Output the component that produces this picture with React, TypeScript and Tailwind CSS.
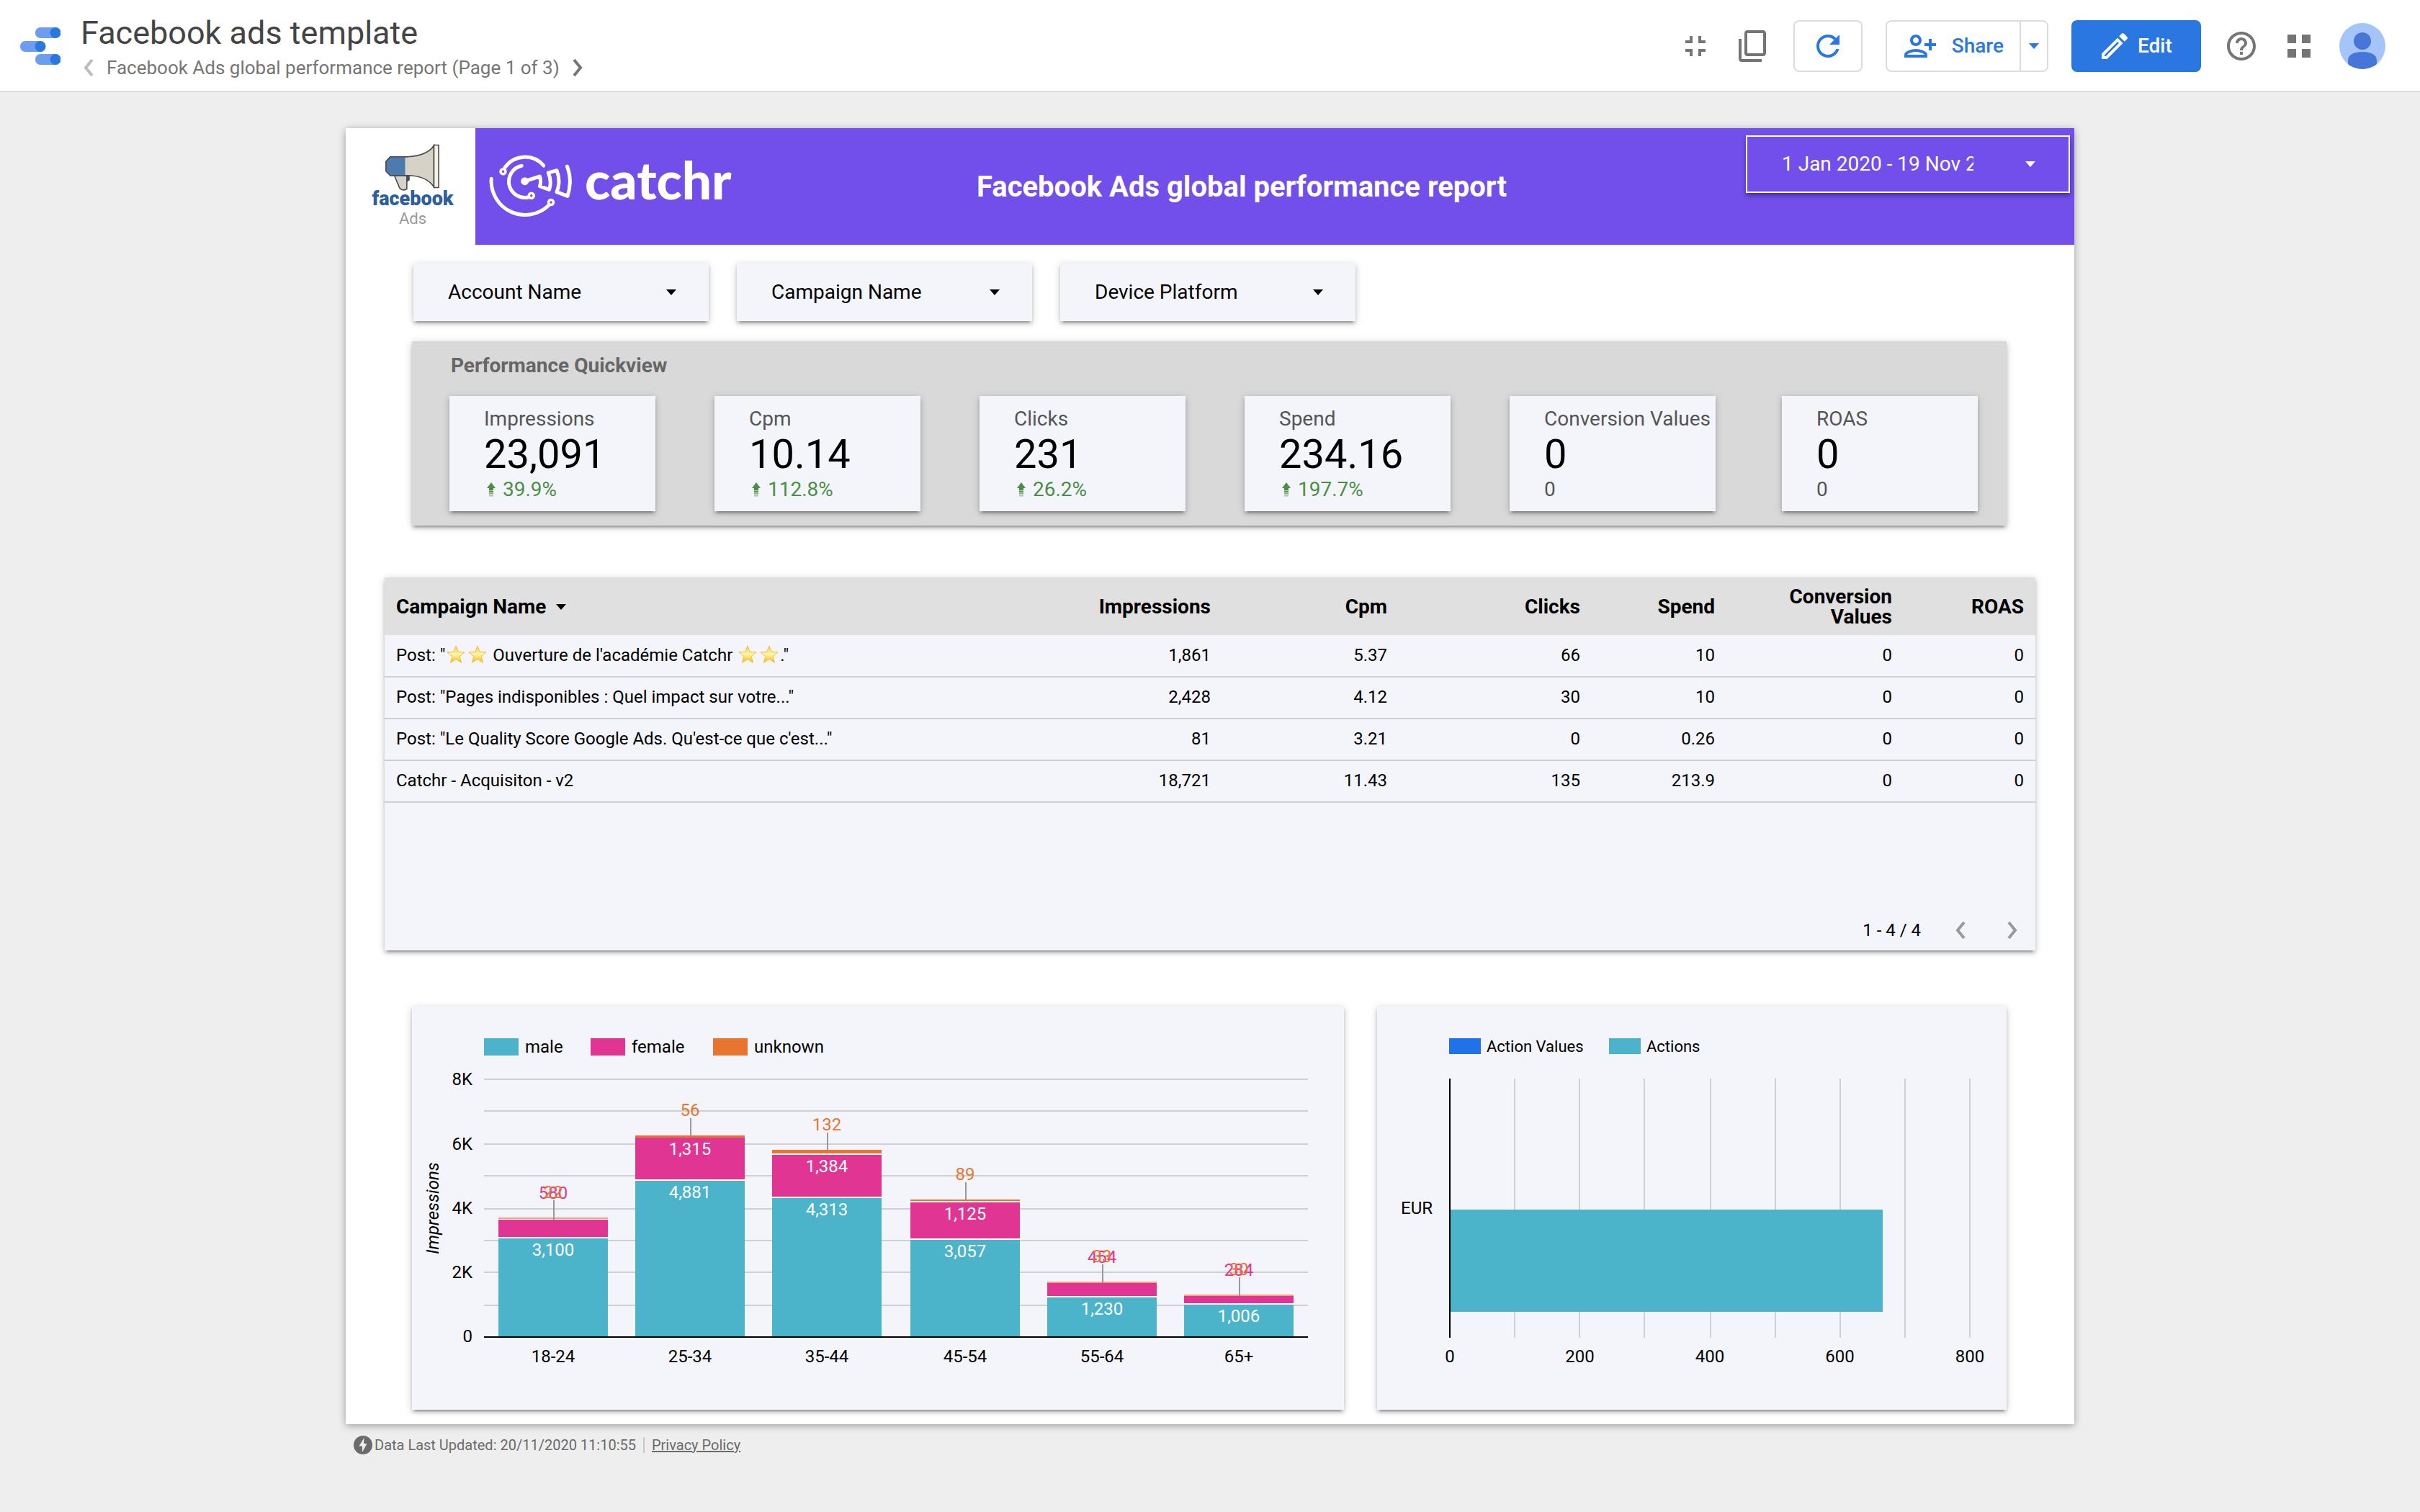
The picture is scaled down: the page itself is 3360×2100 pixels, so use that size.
import React from "react";

const cardShadow =
  "shadow-[0_4px_4px_rgba(0,0,0,0.14),0_6px_2px_-4px_rgba(0,0,0,0.2),0_2px_10px_rgba(0,0,0,0.2)]";

function Icon({ d, className = "" }: { d: string; className?: string }) {
  return (
    <svg viewBox="0 0 24 24" className={`size-12 shrink-0 fill-current ${className}`} aria-hidden="true">
      <path d={d} />
    </svg>
  );
}

const icons = {
  exitFullscreen: "M5 16h3v3h2v-5H5v2zm3-8H5v2h5V5H8v3zm6 11h2v-3h3v-2h-5v5zm2-11V5h-2v5h5V8h-3z",
  copy: "M19 1H8C6.9 1 6 1.9 6 3v14c0 1.1.9 2 2 2h11c1.1 0 2-.9 2-2V3c0-1.1-.9-2-2-2zm0 16H8V3h11v14zM2 7v14c0 1.1.9 2 2 2h14v-2H4V7H2z",
  refresh:
    "M17.65 6.35C16.2 4.9 14.21 4 12 4c-4.42 0-7.99 3.58-7.99 8s3.57 8 7.99 8c3.73 0 6.84-2.55 7.73-6h-2.08c-.82 2.33-3.04 4-5.65 4-3.31 0-6-2.69-6-6s2.69-6 6-6c1.66 0 3.14.69 4.22 1.78L13 11h7V4l-2.35 2.35z",
  personAdd:
    "M13 8c0-2.21-1.79-4-4-4S5 5.79 5 8s1.79 4 4 4 4-1.79 4-4zm-2 0c0 1.1-.9 2-2 2s-2-.9-2-2 .9-2 2-2 2 .9 2 2zM1 18v2h16v-2c0-2.66-5.33-4-8-4s-8 1.34-8 4zm2 0c.2-.71 3.3-2 6-2 2.69 0 5.78 1.28 6 2H3zM20 15v-3h3v-2h-3V7h-2v3h-3v2h3v3h2z",
  edit: "M14.06 9.02l.92.92L5.92 19H5v-.92l9.06-9.06M17.66 3c-.25 0-.51.1-.7.29l-1.83 1.83 3.75 3.75 1.83-1.83c.39-.39.39-1.02 0-1.41l-2.34-2.34c-.2-.2-.45-.29-.71-.29zm-3.6 3.19L3 17.25V21h3.75L17.81 9.94l-3.75-3.75z",
  help: "M11 18h2v-2h-2v2zm1-16C6.48 2 2 6.48 2 12s4.48 10 10 10 10-4.48 10-10S17.52 2 12 2zm0 18c-4.41 0-8-3.59-8-8s3.59-8 8-8 8 3.59 8 8-3.59 8-8 8zm0-14c-2.21 0-4 1.79-4 4h2c0-1.1.9-2 2-2s2 .9 2 2c0 2-3 1.75-3 5h2c0-2.25 3-2.5 3-5 0-2.21-1.79-4-4-4z",
  apps: "M4 4h6v6H4zM14 4h6v6h-6zM4 14h6v6H4zM14 14h6v6h-6z",
};

function Caret({ className = "" }: { className?: string }) {
  return (
    <svg viewBox="0 0 14 8" className={`h-2 w-3.5 shrink-0 fill-current ${className}`} aria-hidden="true">
      <path d="M0 0h14L7 8z" />
    </svg>
  );
}

function Chevron({ left = false, className = "" }: { left?: boolean; className?: string }) {
  return (
    <svg viewBox="0 0 14 26" className={`shrink-0 fill-none stroke-current ${className}`} strokeWidth="4" aria-hidden="true">
      <path d={left ? "M12 2L3 13l9 11" : "M2 2l9 11-9 11"} />
    </svg>
  );
}

function StudioLogo() {
  const pills = [
    [21, 0],
    [0, 19],
    [21, 37],
  ];
  return (
    <svg viewBox="0 0 56 52" className="h-[52px] w-14 shrink-0" aria-label="Data Studio">
      {pills.map(([x, y]) => (
        <g key={y}>
          <rect x={x} y={y} width="35" height="15" rx="7" fill="#6d9eee" />
          <circle cx={x + 28} cy={y + 7.5} r="7.5" fill="#2a77e2" />
        </g>
      ))}
    </svg>
  );
}

function TopBar() {
  return (
    <header className="flex h-32 items-center justify-between border-b-2 border-[#dadce0] bg-white pt-0.5 pr-12 pl-7">
      <div className="flex items-center gap-7">
        <StudioLogo />
        <div>
          <h1 className="text-[45px] leading-[56px] text-[#444]">Facebook ads template</h1>
          <div className="mt-1 flex items-center gap-[18px] pl-1 text-[26px] leading-8 text-[#757575]">
            <button aria-label="Previous page">
              <Chevron left className="h-[26px] w-3.5 text-[#bdbdbd]" />
            </button>
            <span>Facebook Ads global performance report (Page 1 of 3)</span>
            <button aria-label="Next page">
              <Chevron className="h-[26px] w-3.5" />
            </button>
          </div>
        </div>
      </div>
      <div className="flex items-center gap-8 text-[#757575]">
        <button aria-label="Exit full screen">
          <Icon d={icons.exitFullscreen} />
        </button>
        <button aria-label="Make a copy">
          <Icon d={icons.copy} />
        </button>
        <button
          aria-label="Refresh data"
          className="flex h-[72px] w-24 items-center justify-center rounded-lg border-2 border-[#dadce0] text-[#2a77e2]"
        >
          <Icon d={icons.refresh} />
        </button>
        <div className="flex h-[72px] rounded-lg border-2 border-[#dadce0] text-[#2a77e2]">
          <button className="flex items-center gap-5 border-r-2 border-[#dadce0] px-[22px] text-[28px] font-medium">
            <Icon d={icons.personAdd} />
            Share
          </button>
          <button aria-label="More sharing options" className="flex w-9 items-center justify-center">
            <Caret />
          </button>
        </div>
        <button className="flex h-[72px] w-[180px] items-center gap-2 rounded-lg bg-[#2a77e2] pl-9 text-[28px] font-medium text-white">
          <Icon d={icons.edit} />
          Edit
        </button>
        <button aria-label="Help">
          <Icon d={icons.help} />
        </button>
        <button aria-label="Google apps">
          <Icon d={icons.apps} />
        </button>
        <button aria-label="Account" className="size-16 overflow-hidden rounded-full bg-[#a5c4f9]">
          <svg viewBox="0 0 64 64" fill="#4676d7" aria-hidden="true">
            <circle cx="32" cy="25" r="12" />
            <path d="M12 64V52c0-8 8-12 20-12s20 4 20 12v12z" />
          </svg>
        </button>
      </div>
    </header>
  );
}

function FacebookAdsLogo() {
  return (
    <div className="flex w-[180px] flex-col items-center bg-white pt-5 pl-1.5">
      <svg viewBox="0 0 82 68" className="h-[68px] w-[82px]" stroke="#4a4a4a" strokeWidth="1.6" aria-hidden="true">
        <path d="M15.500 45.700L22.800 63q4 5 10 1.500L33 45.700z" fill="#d6d2c8" />
        <path d="M33 45.700v8l3-2v-6z" fill="#31588c" />
        <path d="M10 19.700h24Q62 18 70.500 4v57.700Q60 46 34.600 45.700H10l-6-6V26.300z" fill="#d6d2c8" />
        <path d="M10 19.700h20.500v26H10l-6-6V26.300z" fill="#4d7bb0" stroke="none" />
        <path d="M34 19.700H10l-6 6.600v13.400l6 6h24" fill="none" />
        <path d="M70.500 3.500H77v59h-6.500z" fill="#f6f2e4" />
      </svg>
      <span className="text-[27px] leading-5 font-black text-[#2c5d9c]">facebook</span>
      <span className="mt-1 text-[22px] leading-7 text-[#999]">Ads</span>
    </div>
  );
}

function CatchrLogo() {
  return (
    <div className="flex w-[348px] items-start gap-3.5 pt-8">
      <svg
        viewBox="0 0 122 98"
        className="h-[98px] w-[122px] shrink-0 fill-none stroke-white"
        strokeWidth="5"
        strokeLinecap="round"
        strokeLinejoin="round"
        aria-hidden="true"
      >
        <path d="M24.500 23.500A34 34 0 0 1 78.800 20" />
        <path d="M6.200 38.300A47 47 0 0 0 86 75" />
        <path d="M48.200 20.300A22.300 22.300 0 0 0 57.500 64" />
        <circle cx="22.500" cy="28.300" r="3.500" strokeWidth="3.500" />
        <circle cx="89" cy="71" r="3.500" strokeWidth="3.500" />
        <circle cx="61.800" cy="61.700" r="3.500" strokeWidth="3.500" />
        <circle cx="52.700" cy="41.700" r="3" fill="white" />
        <path d="M52.700 41.700L73.500 35Q75.500 42 73.500 48.700L86.500 53.300Q90.500 42 85.300 30L97 26.700Q103 42 97 56.700L112 62.300Q119 41 111.400 21" />
      </svg>
      <span className="font-[Lato] text-[73px] leading-[78px] font-black text-white">catchr</span>
    </div>
  );
}

function Filter({ name }: { name: string }) {
  return (
    <div className={`relative w-[410px] bg-[#f4f5fb] ${cardShadow}`}>
      <select aria-label={name} className="h-20 w-full appearance-none pl-12 text-[28px] text-black">
        <option>{name}</option>
      </select>
      <Caret className="pointer-events-none absolute top-9 right-[45px]" />
    </div>
  );
}

type Metric = { label: string; value: string; change?: string };

const metrics: Metric[] = [
  { label: "Impressions", value: "23,091", change: "39.9%" },
  { label: "Cpm", value: "10.14", change: "112.8%" },
  { label: "Clicks", value: "231", change: "26.2%" },
  { label: "Spend", value: "234.16", change: "197.7%" },
  { label: "Conversion Values", value: "0" },
];

function Scorecard({ metric, className = "" }: { metric: Metric; className?: string }) {
  return (
    <div className={`h-40 bg-[#f4f5fb] pt-4 pl-12 whitespace-nowrap ${cardShadow} ${className}`}>
      <div className="text-[28px] leading-8 text-[#555]">{metric.label}</div>
      <div className="text-[56px] leading-[66px] text-black">{metric.value}</div>
      {metric.change ? (
        <div className="flex items-center gap-2.5 pl-1 text-[28px] leading-8 text-[#4a8f43]">
          <svg viewBox="0 0 12 20" className="h-5 w-3 shrink-0 fill-current" aria-hidden="true">
            <path d="M6 0l6 8H9v3H3V8H0z" />
            <path d="M3 11.500h6v2.500H3z" opacity="0.85" />
            <path d="M3 14.500h6v2H3z" opacity="0.65" />
            <path d="M3 17.500h6v2H3z" opacity="0.45" />
          </svg>
          {metric.change}
        </div>
      ) : (
        <div className="text-[28px] leading-8 text-[#555]">0</div>
      )}
    </div>
  );
}

function Star() {
  return (
    <svg viewBox="0 0 24 24" className="mx-0.5 inline-block size-[26px] align-[-4px]" aria-label="star">
      <defs>
        <linearGradient id="star" x1="0" y1="0" x2="0" y2="1">
          <stop offset="0" stopColor="#fbc65a" />
          <stop offset="0.5" stopColor="#fff6a8" />
          <stop offset="1" stopColor="#f9b90c" />
        </linearGradient>
      </defs>
      <path
        d="M12 1l3 7.800 8.200.4-6.400 5.200 2.200 8.100-7-4.600-7 4.600 2.200-8.100L.8 9.200 9 8.800z"
        fill="url(#star)"
        stroke="#f2b632"
        strokeWidth="0.8"
      />
    </svg>
  );
}

const rows: { name: React.ReactNode; values: string[] }[] = [
  {
    name: (
      <>
        Post: "<Star />
        <Star />
        {" Ouverture de l'académie Catchr "}
        <Star />
        <Star />
        ."
      </>
    ),
    values: ["1,861", "5.37", "66", "10", "0", "0"],
  },
  { name: 'Post: "Pages indisponibles : Quel impact sur votre..."', values: ["2,428", "4.12", "30", "10", "0", "0"] },
  {
    name: "Post: \"Le Quality Score Google Ads. Qu'est-ce que c'est...\"",
    values: ["81", "3.21", "0", "0.26", "0", "0"],
  },
  { name: "Catchr - Acquisiton - v2", values: ["18,721", "11.43", "135", "213.9", "0", "0"] },
];

function CampaignTable() {
  return (
    <section className={`mx-[54px] mt-[72px] flex min-h-[518px] flex-col justify-between bg-[#f4f5fb] ${cardShadow}`}>
      <table className="w-full table-fixed text-right text-2xl leading-8 text-black">
        <colgroup>
          <col />
          <col className="w-[262px]" />
          <col className="w-[245px]" />
          <col className="w-[268px]" />
          <col className="w-[187px]" />
          <col className="w-[246px]" />
          <col className="w-[183px]" />
        </colgroup>
        <thead>
          <tr className="h-20 bg-[#e0e0e0] text-[28px] leading-7">
            <th className="px-4 pt-0.5 text-left font-bold">
              <button className="flex items-center gap-3.5 font-bold">
                Campaign Name
                <Caret />
              </button>
            </th>
            {["Impressions", "Cpm", "Clicks", "Spend", "Conversion Values", "ROAS"].map((h) => (
              <th key={h} className="px-4 pt-0.5 font-bold">
                {h}
              </th>
            ))}
          </tr>
        </thead>
        <tbody>
          {rows.map((row, i) => (
            <tr key={i} className="h-[58px] border-b-2 border-[#cfd0d3]">
              <td className="px-4 pb-0.5 text-left">{row.name}</td>
              {row.values.map((v, j) => (
                <td key={j} className="px-4 pb-0.5">
                  {v}
                </td>
              ))}
            </tr>
          ))}
        </tbody>
      </table>
      <div className="flex items-center justify-end pr-[25px] pb-3 text-2xl leading-8 text-black">
        <span className="mr-12">1 - 4 / 4</span>
        <button aria-label="Previous rows" className="mr-[58px] text-[#999]">
          <Chevron left className="h-[26px] w-3.5" />
        </button>
        <button aria-label="Next rows" className="text-[#999]">
          <Chevron className="h-[26px] w-3.5" />
        </button>
      </div>
    </section>
  );
}

const TEAL = "#4bb3ca";
const PINK = "#e03593";
const ORANGE = "#e8752f";

/* Tops of the stacked segments: [unknown, female, female end, male], in chart units. */
const ages = [
  { age: "18-24", x: 120, male: "3,100", female: "580", unknown: "22", tops: [293, 296, 320, 322], thin: 2, small: true, faded: true },
  { age: "25-34", x: 310, male: "4,881", female: "1,315", unknown: "56", tops: [179, 182, 240, 242], thin: 3, small: false, faded: false },
  { age: "35-44", x: 500, male: "4,313", female: "1,384", unknown: "132", tops: [199, 206, 264, 266], thin: 5, small: false, faded: false },
  { age: "45-54", x: 692, male: "3,057", female: "1,125", unknown: "89", tops: [268, 272, 322, 324], thin: 2, small: false, faded: false },
  { age: "55-64", x: 882, male: "1,230", female: "454", unknown: "33", tops: [382, 384, 402, 404], thin: 2, small: true, faded: true },
  { age: "65+", x: 1072, male: "1,006", female: "284", unknown: "30", tops: [400, 402, 412, 414], thin: 2, small: true, faded: true },
];

function AgeChart() {
  const lines = [100, 144, 190, 234, 280, 324, 368, 414];
  return (
    <svg viewBox="0 0 1294 560" className="block h-auto w-full text-[24px]" role="img" aria-label="Impressions by age and gender">
      <rect x="100" y="44" width="48" height="24" fill={TEAL} />
      <text x="157" y="64">male</text>
      <rect x="248" y="44" width="48" height="24" fill={PINK} />
      <text x="305" y="64">female</text>
      <rect x="418" y="44" width="48" height="24" fill={ORANGE} />
      <text x="475" y="64">unknown</text>
      {lines.map((y) => (
        <rect key={y} x="100" y={y} width="1144" height="2" fill="#cfd0d3" />
      ))}
      {["8K", "6K", "4K", "2K", "0"].map((t, i) => (
        <text key={t} x="84" y={109 + i * 90 - (i > 1 ? i - 1 : 0)} textAnchor="end">
          {t}
        </text>
      ))}
      <text transform="translate(37 280) rotate(-90)" textAnchor="middle" fontStyle="italic">
        Impressions
      </text>
      {ages.map((a) => {
        const [top, female, femaleEnd, male] = a.tops;
        const mid = a.x + 76;
        return (
          <g key={a.age} textAnchor="middle">
            <rect x={a.x} y={top} width="152" height={458 - top} fill="#fff" />
            <rect x={a.x} y={top} width="152" height={a.thin} fill={ORANGE} opacity={a.faded ? 0.65 : 1} />
            <rect x={a.x} y={female} width="152" height={femaleEnd - female} fill={PINK} />
            <rect x={a.x} y={male} width="152" height={458 - male} fill={TEAL} />
            <rect x={mid} y={top - 24} width="2" height={a.small ? female - top + 24 : 24} fill="#999" />
            {a.small ? (
              <text x={mid} y={top - 26} fill={PINK}>
                {a.female}
              </text>
            ) : (
              <text x={mid} y={female + 24} fill="#fff">
                {a.female}
              </text>
            )}
            <text x={mid} y={top - 27} fill={ORANGE}>
              {a.unknown}
            </text>
            <text x={mid} y={male + 24} fill="#fff">
              {a.male}
            </text>
            <text x={mid} y="494">
              {a.age}
            </text>
          </g>
        );
      })}
      <rect x="100" y="458" width="1144" height="2" fill="#000" />
    </svg>
  );
}

function ActionsChart() {
  const lines = [190, 280, 370, 462, 552, 642, 732, 822];
  return (
    <svg viewBox="0 0 874 560" className="block h-auto w-full text-[24px]" role="img" aria-label="Actions by currency">
      <g className="text-[22px]">
        <rect x="100" y="44" width="44" height="22" fill="#1f72e8" />
        <text x="152" y="63">Action Values</text>
        <rect x="322" y="44" width="44" height="22" fill={TEAL} />
        <text x="374" y="63">Actions</text>
      </g>
      {lines.map((x) => (
        <rect key={x} x={x} y="100" width="2" height="360" fill="#cfd0d3" />
      ))}
      <rect x="102" y="282" width="600" height="142" fill={TEAL} />
      <rect x="100" y="100" width="2" height="360" fill="#000" />
      <text x="77" y="288" textAnchor="end">EUR</text>
      {["0", "200", "400", "600", "800"].map((t, i) => (
        <text key={t} x={101 + i * 180.5} y="494" textAnchor="middle">
          {t}
        </text>
      ))}
    </svg>
  );
}

function Report() {
  return (
    <main className="bg-white pb-5 shadow-[0_2px_10px_rgba(0,0,0,0.35)]">
      <div className="flex">
        <FacebookAdsLogo />
        <div className="flex h-[162px] flex-1 bg-[#724eeb] pr-1.5 pl-4">
          <CatchrLogo />
          <h2 className="flex-1 pt-[58px] text-center text-[40px] leading-12 font-bold text-white">
            Facebook Ads global performance report
          </h2>
          <button
            className="mt-2.5 flex h-20 w-[450px] items-center justify-between border-2 border-white pr-[46px] pl-12 text-[28px] text-white shadow-[0_4px_6px_rgba(0,0,0,0.35)]"
          >
            <span className="w-[266px] overflow-hidden text-left whitespace-nowrap">1 Jan 2020 - 19 Nov 2020</span>
            <Caret />
          </button>
        </div>
      </div>

      <div className="mt-[26px] flex gap-[39px] pl-[94px]">
        <Filter name="Account Name" />
        <Filter name="Campaign Name" />
        <Filter name="Device Platform" />
      </div>

      <section className={`mt-7 mr-[94px] ml-[92px] bg-[#d9d9d9] pt-[18px] pr-10 pb-5 pl-[52px] ${cardShadow}`}>
        <h3 className="pl-0.5 text-[28px] leading-8 font-bold text-[#666]">Performance Quickview</h3>
        <div className="mt-[26px] flex gap-[82px]">
          {metrics.map((m) => (
            <Scorecard key={m.label} metric={m} className="w-[286px]" />
          ))}
          <Scorecard metric={{ label: "ROAS", value: "0" }} className="ml-2.5 w-[272px]" />
        </div>
      </section>

      <CampaignTable />

      <div className="mt-[78px] mr-[94px] ml-[92px] grid grid-cols-[1294fr_874fr] gap-[46px] text-black">
        <section className={`bg-[#f4f5fb] ${cardShadow}`}>
          <AgeChart />
        </section>
        <section className={`bg-[#f4f5fb] ${cardShadow}`}>
          <ActionsChart />
        </section>
      </div>
    </main>
  );
}

export default function App() {
  return (
    <div className="min-h-screen bg-[#eee] font-[Roboto,sans-serif]">
      <TopBar />
      <div className="mx-auto w-full max-w-[2400px] pt-[50px]">
        <Report />
        <footer className="mt-4 flex items-center pl-[11px] text-[20px] leading-6 text-[#6b6b6b]">
          <svg viewBox="0 0 26 26" className="mr-[3px] size-[26px]" aria-hidden="true">
            <circle cx="13" cy="13" r="13" fill="#6b6b6b" />
            <path d="M14.500 3L7.500 14.500h4.500V23l6.500-12h-4.500z" fill="#eee" />
          </svg>
          <span>Data Last Updated: 20/11/2020 11:10:55</span>
          <span className="mx-2.5 h-[22px] w-0.5 bg-[#c8c8c8]" />
          <a href="#privacy" className="underline">
            Privacy Policy
          </a>
        </footer>
      </div>
    </div>
  );
}
